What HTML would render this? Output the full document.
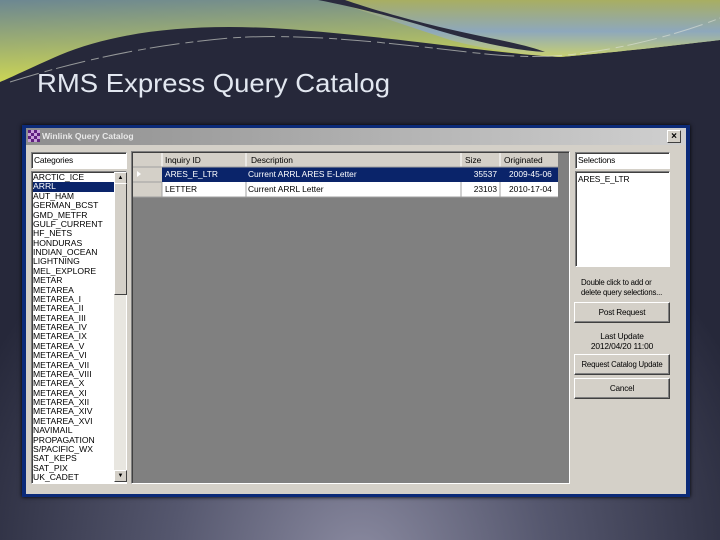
<!DOCTYPE html>
<html><head><meta charset="utf-8"><style>
body{margin:0;width:720px;height:540px;overflow:hidden;position:relative;font-family:"Liberation Sans",sans-serif;background:#2b2c3e}
.a{position:absolute}
.t{font-size:8.4px;color:#000;white-space:nowrap;letter-spacing:-0.15px}
.btn{position:absolute;left:574px;width:94px;height:19px;background:#d4d0c8;border:1px solid;border-color:#fff #404040 #404040 #fff;box-shadow:inset -1px -1px #808080;font-size:8.2px;letter-spacing:-0.2px;text-align:center;line-height:19px;white-space:nowrap}
.sunk{border:1px solid;border-color:#808080 #fff #fff #808080;box-shadow:inset 1px 1px #404040}
</style></head><body>
<svg class="a" style="left:0;top:0" width="720" height="540">
<defs>
<radialGradient id="bg" cx="360" cy="560" r="420" gradientUnits="userSpaceOnUse">
<stop offset="0" stop-color="#8a8aa0"/><stop offset="0.45" stop-color="#55576e"/><stop offset="1" stop-color="#26283a"/></radialGradient>
<linearGradient id="tl" x1="0" y1="0" x2="0.3" y2="1"><stop offset="0" stop-color="#6c8792"/><stop offset="0.5" stop-color="#9fb070"/><stop offset="1" stop-color="#d4dc50"/></linearGradient>
<linearGradient id="tr" x1="0" y1="0" x2="0" y2="1"><stop offset="0" stop-color="#a8ae62"/><stop offset="0.55" stop-color="#8ea8bc"/><stop offset="1" stop-color="#c8d070"/></linearGradient>
</defs>
<rect width="720" height="540" fill="url(#bg)"/>
<path d="M0 0H720V40C670 46 610 53 560 57C500 54 420 40 300 30C200 22 120 30 60 55C30 68 10 78 0 82Z" fill="url(#tl)"/>
<path d="M330 0H720V40C670 46 610 53 560 57C520 55 480 48 450 40Z" fill="url(#tr)"/>
<path d="M318 0H345C380 12 430 26 490 38C515 43 535 48 545 52C510 50 470 40 430 28C390 16 350 6 318 0Z" fill="#2a2b3e"/>
<path d="M10 82C80 60 150 45 230 38C300 33 380 42 450 50C500 56 540 60 590 52C640 45 690 30 720 18" fill="none" stroke="#dfe3d8" stroke-width="1" stroke-dasharray="30 6 8 4" opacity="0.6"/>
<text x="37" y="92" font-family="Liberation Sans" font-size="26" fill="#e2e7f0" textLength="353" lengthAdjust="spacingAndGlyphs">RMS Express Query Catalog</text>
</svg>
<div class="a" style="left:22px;top:125px;width:668px;height:372px;background:#0b2a78;box-shadow:0 0 4px #000"></div>
<div class="a" style="left:26px;top:128px;width:660px;height:366px;background:#d4d0c8"></div>
<div class="a" style="left:26px;top:128px;width:660px;height:17px;background:linear-gradient(90deg,#8e8e8e,#d0d0d0)"></div>
<svg class="a" style="left:28px;top:130px" width="12" height="12"><rect width="12" height="12" fill="#c8a0d8"/><g fill="#602080"><rect x="0" y="0" width="3" height="3"/><rect x="6" y="0" width="3" height="3"/><rect x="3" y="3" width="3" height="3"/><rect x="9" y="3" width="3" height="3"/><rect x="0" y="6" width="3" height="3"/><rect x="6" y="6" width="3" height="3"/><rect x="3" y="9" width="3" height="3"/><rect x="9" y="9" width="3" height="3"/></g></svg>
<div class="a" style="left:42px;top:131px;font-size:8.6px;font-weight:bold;color:#e8e8e8">Winlink Query Catalog</div>
<div class="a" style="left:667px;top:130px;width:12px;height:11px;background:#d4d0c8;border:1px solid;border-color:#fff #404040 #404040 #fff;font-size:10px;font-weight:bold;line-height:11px;text-align:center">×</div>

<div class="a sunk t" style="left:31px;top:152px;width:92px;height:15px;background:#fff;line-height:15px;padding-left:2px">Categories</div>
<div class="a sunk" style="left:31px;top:171px;width:94px;height:311px;background:#fff"></div>
<div class="a" style="left:114px;top:172px;width:12px;height:310px;background:#e8e6e0"></div>
<div class="a" style="left:114px;top:172px;width:11px;height:10px;background:#d4d0c8;border:1px solid;border-color:#fff #404040 #404040 #fff;font-size:6px;text-align:center;line-height:10px">▲</div>
<div class="a" style="left:114px;top:183px;width:11px;height:110px;background:#d4d0c8;border:1px solid;border-color:#fff #404040 #404040 #fff"></div>
<div class="a" style="left:114px;top:470px;width:11px;height:10px;background:#d4d0c8;border:1px solid;border-color:#fff #404040 #404040 #fff;font-size:6px;text-align:center;line-height:10px">▼</div>
<div class="a" style="left:33px;top:173px;width:81px;font-size:8.6px;line-height:9.375px">
<div>ARCTIC_ICE</div><div style="background:#0a246a;color:#fff">ARRL</div><div>AUT_HAM</div><div>GERMAN_BCST</div><div>GMD_METFR</div><div>GULF_CURRENT</div><div>HF_NETS</div><div>HONDURAS</div><div>INDIAN_OCEAN</div><div>LIGHTNING</div><div>MEL_EXPLORE</div><div>METAR</div><div>METAREA</div><div>METAREA_I</div><div>METAREA_II</div><div>METAREA_III</div><div>METAREA_IV</div><div>METAREA_IX</div><div>METAREA_V</div><div>METAREA_VI</div><div>METAREA_VII</div><div>METAREA_VIII</div><div>METAREA_X</div><div>METAREA_XI</div><div>METAREA_XII</div><div>METAREA_XIV</div><div>METAREA_XVI</div><div>NAVIMAIL</div><div>PROPAGATION</div><div>S/PACIFIC_WX</div><div>SAT_KEPS</div><div>SAT_PIX</div><div>UK_CADET</div></div>

<div class="a sunk" style="left:131px;top:151px;width:437px;height:331px;background:#808080"></div>
<svg class="a" style="left:133px;top:153px" width="425" height="45" font-family="Liberation Sans" font-size="8.4">
<rect width="425" height="14" fill="#d4d0c8"/>
<rect x="0" y="14" width="29" height="30" fill="#d4d0c8"/>
<rect x="29" y="14" width="396" height="15" fill="#0a246a"/>
<rect x="29" y="29" width="396" height="15" fill="#fff"/>
<g stroke="#fff"><line x1="29" y1="0" x2="29" y2="14"/><line x1="113" y1="0" x2="113" y2="14"/><line x1="328" y1="0" x2="328" y2="14"/><line x1="367" y1="0" x2="367" y2="14"/></g>
<g stroke="#a0a0a0"><line x1="0" y1="29" x2="29" y2="29"/><line x1="29" y1="29" x2="29" y2="44"/><line x1="113" y1="29" x2="113" y2="44"/><line x1="328" y1="29" x2="328" y2="44"/><line x1="367" y1="29" x2="367" y2="44"/><line x1="0" y1="44" x2="425" y2="44"/><line x1="0" y1="14" x2="425" y2="14"/></g>
<path d="M4 18l4 3-4 3z" fill="#fff"/>
<text x="32" y="10">Inquiry ID</text><text x="118" y="10">Description</text><text x="332" y="10">Size</text><text x="371" y="10">Originated</text>
<g fill="#fff"><text x="32" y="24">ARES_E_LTR</text><text x="115" y="24">Current ARRL ARES E-Letter</text><text x="364" y="24" text-anchor="end">35537</text><text x="376" y="24">2009-45-06</text></g>
<text x="32" y="39">LETTER</text><text x="115" y="39">Current ARRL Letter</text><text x="364" y="39" text-anchor="end">23103</text><text x="376" y="39">2010-17-04</text>
</svg>

<div class="a sunk t" style="left:575px;top:152px;width:91px;height:15px;background:#fff;line-height:15px;padding-left:2px">Selections</div>
<div class="a sunk t" style="left:575px;top:171px;width:91px;height:92px;background:#fff;padding:2px 0 0 2px">ARES_E_LTR</div>
<div class="a t" style="left:581px;top:278px;line-height:10px;font-size:7.8px;letter-spacing:-0.2px">Double click to add or<br>delete query selections...</div>
<div class="btn" style="top:302px">Post Request</div>
<div class="a t" style="left:574px;top:331px;width:96px;text-align:center;line-height:10px">Last Update<br>2012/04/20 11:00</div>
<div class="btn" style="top:354px;font-size:7.8px">Request Catalog Update</div>
<div class="btn" style="top:378px">Cancel</div>
</body></html>
